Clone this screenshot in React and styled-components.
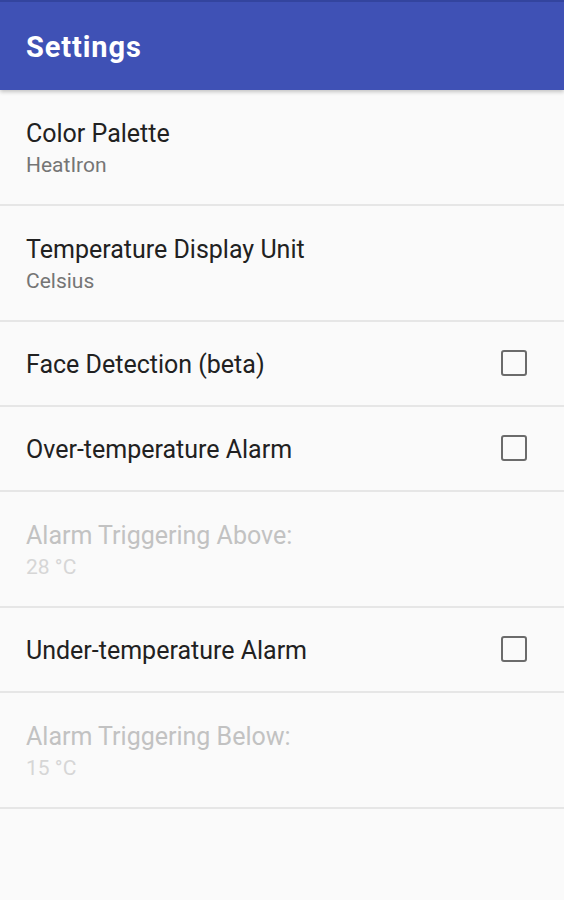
import React from "react";
import styled, { createGlobalStyle } from "styled-components";

const Global = createGlobalStyle`
  html, body { margin: 0; padding: 0; background: #fafafa; }
  body { font-family: Roboto, "Noto Sans", sans-serif; }
`;

const Page = styled.div`
  width: 564px;
  height: 900px;
  background: #fafafa;
  display: flex;
  flex-direction: column;
  overflow: hidden;
`;

const AppBar = styled.header`
  height: 90px;
  flex: 0 0 90px;
  background: #3f51b5;
  border-top: 2px solid #33449e;
  box-sizing: border-box;
  display: flex;
  align-items: center;
  padding: 0 26px;
  box-shadow: 0 2px 4px rgba(0, 0, 0, 0.22);
  position: relative;
  z-index: 1;
`;

const Title = styled.h1`
  margin: 0;
  margin-top: 2px;
  font-size: 29px;
  font-weight: 700;
  color: #ffffff;
  letter-spacing: 0.9px;
`;

const List = styled.div`
  display: flex;
  flex-direction: column;
`;

const Row = styled.div`
  height: ${(p) => (p.$tall ? 114 : 83)}px;
  box-sizing: content-box;
  border-bottom: 2px solid #e6e6e6;
  display: flex;
  align-items: center;
  justify-content: space-between;
  padding: 0 36px 0 26px;
`;

const Texts = styled.div`
  display: flex;
  flex-direction: column;
  gap: 4px;
  padding-top: 3px;
`;

const RowTitle = styled.div`
  font-size: 25px;
  line-height: 30px;
  color: ${(p) => (p.$disabled ? "#c2c2c2" : "#212121")};
`;

const RowSub = styled.div`
  font-size: 21px;
  line-height: 25px;
  color: ${(p) => (p.$disabled ? "#d6d6d6" : "#757575")};
`;

const Check = styled.span`
  width: 22px;
  height: 22px;
  border: 2.5px solid #6b6b6b;
  border-radius: 3px;
  box-sizing: content-box;
  display: block;
  margin-top: -1px;
  margin-right: 1px;
`;

const items = [
  { title: "Color Palette", sub: "HeatIron" },
  { title: "Temperature Display Unit", sub: "Celsius" },
  { title: "Face Detection (beta)", check: true },
  { title: "Over-temperature Alarm", check: true },
  { title: "Alarm Triggering Above:", sub: "28 °C", disabled: true },
  { title: "Under-temperature Alarm", check: true },
  { title: "Alarm Triggering Below:", sub: "15 °C", disabled: true },
];

export default function App() {
  return (
    <>
      <Global />
      <Page>
        <AppBar>
          <Title>Settings</Title>
        </AppBar>
        <List>
          {items.map((it) => (
            <Row key={it.title} $tall={!!it.sub}>
              <Texts>
                <RowTitle $disabled={it.disabled}>{it.title}</RowTitle>
                {it.sub && <RowSub $disabled={it.disabled}>{it.sub}</RowSub>}
              </Texts>
              {it.check && <Check />}
            </Row>
          ))}
        </List>
      </Page>
    </>
  );
}
